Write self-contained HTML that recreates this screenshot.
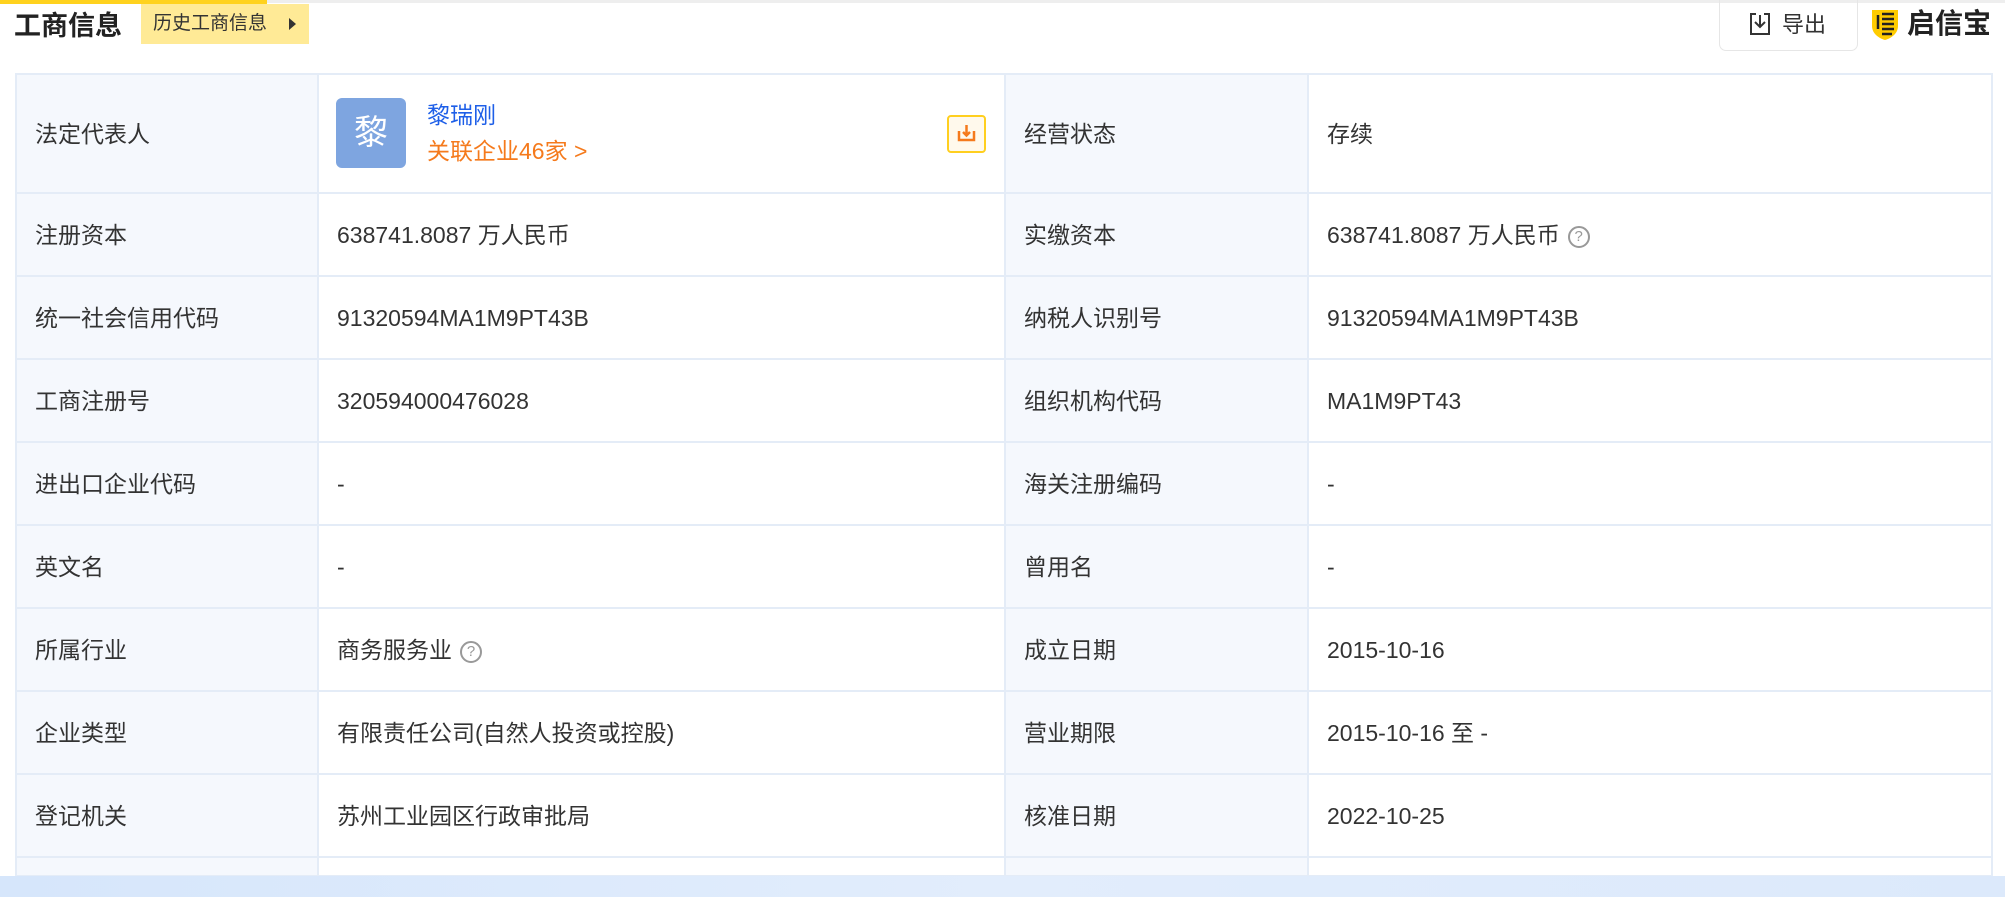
<!DOCTYPE html>
<html><head><meta charset="utf-8"><style>
*{margin:0;padding:0;box-sizing:border-box}
body{width:2005px;height:897px;overflow:hidden;background:#fff;font-family:"Liberation Sans","Noto Sans CJK SC",sans-serif;color:#333;position:relative}
.topline{position:absolute;left:0;top:0;width:2005px;height:3px;background:#eee}
.ybar{position:absolute;left:0;top:0;width:267px;height:4px;background:#ffd21e}
.title{position:absolute;left:14px;top:6px;font-size:27px;font-weight:bold;color:#222;line-height:40px}
.tag{position:absolute;left:141px;top:4px;width:168px;height:40px;background:#ffea96;font-size:19px;line-height:40px;padding-left:12px;color:#333}
.tag:after{content:"";position:absolute;right:13px;top:14px;border-left:7px solid #333;border-top:6px solid transparent;border-bottom:6px solid transparent}
.exp{position:absolute;left:1719px;top:-2px;width:139px;height:53px;border:1px solid #e6e6e6;border-radius:0 0 7px 7px;font-size:22px;line-height:51px;padding-left:62px;color:#333}
.exp svg{position:absolute;left:29px;top:13px}
.logo{position:absolute;left:1870px;top:6px;font-size:28px;font-weight:bold;color:#222;line-height:36px;padding-left:37px}
.logo svg{position:absolute;left:0;top:1px}
table{position:absolute;left:15px;top:73px;width:1978px;border-collapse:collapse;font-size:23px}
td{border:2px solid #e4ecf7;height:83px;vertical-align:middle;padding-left:18px;line-height:30px}
td.l{background:#f5f8fd}
tr.first td{height:119px}
tr.last td{height:19px}
.av{position:absolute;left:336px;top:98px;width:70px;height:70px;background:#7ea5e0;border-radius:6px;color:#fff;font-size:34px;text-align:center;line-height:70px}
.nm{position:absolute;left:427px;top:100px;font-size:23px;color:#1e5fe8;line-height:30px}
.rel{position:absolute;left:427px;top:136px;font-size:23px;color:#f57a1c;line-height:30px}
.dl{position:absolute;left:947px;top:115px;width:39px;height:38px;border:2px solid #ffcf1f;border-radius:4px;background:#fff9ec}
.q{display:inline-block;width:22px;height:22px;border:2px solid #999;border-radius:50%;font-size:15px;line-height:18px;text-align:center;color:#999;vertical-align:2px;margin-left:8px}
.strip{position:absolute;left:0;top:876px;width:2005px;height:21px;background:linear-gradient(90deg,#d6e6fb,#e2edfc 50%,#dce9fb)}
</style></head><body>
<div class="topline"></div><div class="ybar"></div>
<div class="title">工商信息</div>
<div class="tag">历史工商信息</div>
<div class="exp"><svg width="22" height="24" viewBox="0 0 22 24" fill="none" stroke="#333" stroke-width="2"><path d="M7 2H2v20h18V2h-5"/><path d="M11 3v12M6 10l5 5 5-5"/></svg>导出</div>
<div class="logo"><svg width="30" height="34" viewBox="0 0 30 34"><path d="M2 3h26v16c0 7-6 12-13 14C8 31 2 26 2 19z" fill="#ffcc00"/><path d="M8 8v14M12 7h12M12 12h12M12 17h12M12 22h12M12 27h10" stroke="#222" stroke-width="2.5"/></svg>启信宝</div>
<table>
<colgroup><col style="width:302px"><col style="width:687px"><col style="width:303px"><col></colgroup>
<tr class="first"><td class="l">法定代表人</td><td></td><td class="l">经营状态</td><td>存续</td></tr>
<tr><td class="l">注册资本</td><td>638741.8087 万人民币</td><td class="l">实缴资本</td><td>638741.8087 万人民币<span class="q">?</span></td></tr>
<tr><td class="l">统一社会信用代码</td><td>91320594MA1M9PT43B&#8203;</td><td class="l">纳税人识别号</td><td>91320594MA1M9PT43B</td></tr>
<tr><td class="l">工商注册号</td><td>320594000476028</td><td class="l">组织机构代码</td><td>MA1M9PT43</td></tr>
<tr><td class="l">进出口企业代码</td><td>-</td><td class="l">海关注册编码</td><td>-</td></tr>
<tr><td class="l">英文名</td><td>-</td><td class="l">曾用名</td><td>-</td></tr>
<tr><td class="l">所属行业</td><td>商务服务业<span class="q">?</span></td><td class="l">成立日期</td><td>2015-10-16</td></tr>
<tr><td class="l">企业类型</td><td>有限责任公司(自然人投资或控股)</td><td class="l">营业期限</td><td>2015-10-16 至 -</td></tr>
<tr><td class="l">登记机关</td><td>苏州工业园区行政审批局</td><td class="l">核准日期</td><td>2022-10-25</td></tr>
<tr class="last"><td class="l"></td><td></td><td class="l"></td><td></td></tr>
</table>
<div class="av">黎</div>
<div class="nm">黎瑞刚</div>
<div class="rel">关联企业46家 &gt;</div>
<div class="dl"><svg width="35" height="34" viewBox="0 0 35 34" fill="none" stroke="#f57a1c" stroke-width="2.5"><path d="M10 14v9h15v-9"/><path d="M17.5 8v10M14 15l3.5 3.5L21 15"/></svg></div>
<div class="strip"></div>
</body></html>
